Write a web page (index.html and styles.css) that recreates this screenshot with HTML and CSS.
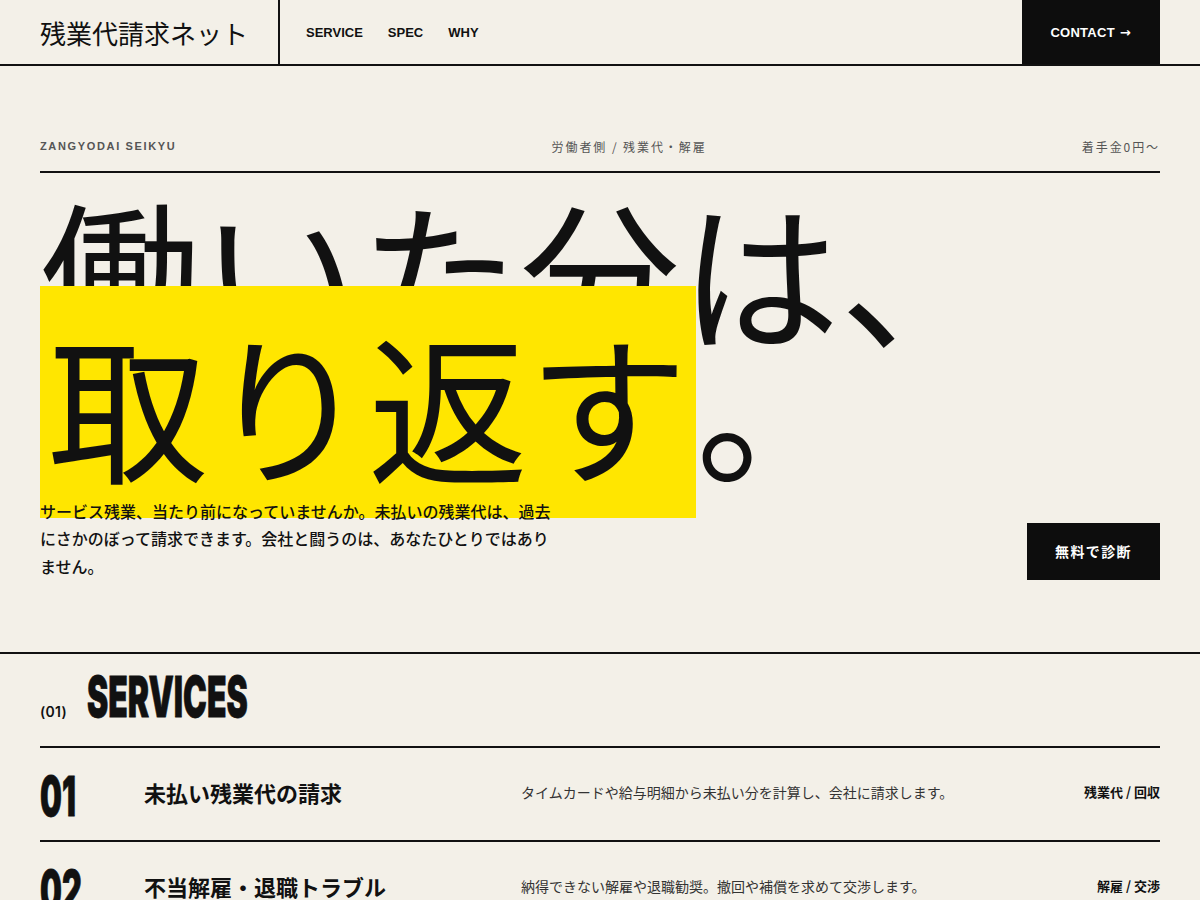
FILE: index.html
```html
<!DOCTYPE html>
<html lang="ja">
<head>
<meta charset="utf-8">
<title>残業代請求ネット</title>
<link rel="stylesheet" href="styles.css">
</head>
<body>
<header class="site-header">
  <div class="logo">残業代請求ネット</div>
  <nav class="nav">
    <a href="#service">SERVICE</a>
    <a href="#spec">SPEC</a>
    <a href="#why">WHY</a>
  </nav>
  <a class="contact" href="#contact">CONTACT <span class="arrow">→</span></a>
</header>

<main>
  <section class="hero">
    <div class="meta">
      <span class="meta-en">ZANGYODAI SEIKYU</span>
      <span class="meta-jp">労働者側 / 残業代・解雇</span>
      <span class="meta-jp">着手金0円〜</span>
    </div>
    <h1 class="headline">働いた分は、<br><span class="mark">取り返す</span>。</h1>
    <div class="hero-foot">
      <p class="lead">サービス残業、当たり前になっていませんか。未払いの残業代は、過去にさかのぼって請求できます。会社と闘うのは、あなたひとりではありません。</p>
      <a class="cta" href="#contact">無料で診断</a>
    </div>
  </section>

  <section class="services" id="service">
    <div class="services-head">
      <span class="sec-num">(01)</span>
      <h2 class="sec-title"><span class="condensed">SERVICES</span></h2>
    </div>
    <div class="row">
      <div class="row-num"><span class="condensed">01</span></div>
      <h3 class="row-title">未払い残業代の請求</h3>
      <p class="row-desc">タイムカードや給与明細から未払い分を計算し、会社に請求します。</p>
      <span class="row-tag">残業代 / 回収</span>
    </div>
    <div class="row">
      <div class="row-num"><span class="condensed">02</span></div>
      <h3 class="row-title">不当解雇・退職トラブル</h3>
      <p class="row-desc">納得できない解雇や退職勧奨。撤回や補償を求めて交渉します。</p>
      <span class="row-tag">解雇 / 交渉</span>
    </div>
    <div class="row">
      <div class="row-num"><span class="condensed">03</span></div>
      <h3 class="row-title">労働審判・訴訟</h3>
      <p class="row-desc">交渉で解決しない場合は、労働審判や訴訟で権利を守ります。</p>
      <span class="row-tag">審判 / 訴訟</span>
    </div>
  </section>
</main>
</body>
</html>
```

FILE: styles.css
```css
* { box-sizing: border-box; }

html, body {
  margin: 0;
  padding: 0;
}

body {
  background: #f3f0e8;
  color: #111;
  font-family: "Noto Sans CJK JP", "Noto Sans", sans-serif;
}

a { color: inherit; text-decoration: none; }

/* Header */
.site-header {
  display: flex;
  align-items: stretch;
  height: 66px;
  border-bottom: 2px solid #111;
}

.logo {
  display: flex;
  align-items: center;
  padding: 0 30px 0 40px;
  border-right: 2px solid #111;
  font-size: 26px;
  font-weight: 400;
}

.nav {
  flex: 1;
  display: flex;
  align-items: center;
  gap: 25px;
  padding-left: 26px;
  font-family: "Liberation Sans", Arial, sans-serif;
  font-weight: 700;
  font-size: 13px;
}

.contact {
  display: flex;
  align-items: center;
  gap: 5px;
  margin-right: 40px;
  padding: 0 29px 0 28px;
  background: #0d0d0d;
  color: #fff;
  font-family: "Liberation Sans", Arial, sans-serif;
  font-weight: 700;
  font-size: 13px;
  letter-spacing: 0.02em;
}

.arrow {
  font-family: "DejaVu Sans", sans-serif;
  font-size: 13px;
  font-weight: 700;
}

/* Hero */
.hero {
  padding: 0 40px 72px;
  border-bottom: 2px solid #111;
}

.meta {
  display: flex;
  justify-content: space-between;
  align-items: center;
  padding: 72px 0 16px;
  border-bottom: 2px solid #111;
  color: #555;
  line-height: 17px;
}

.meta-en {
  font-family: "Liberation Sans", Arial, sans-serif;
  font-weight: 700;
  font-size: 11px;
  letter-spacing: 0.15em;
}

.meta-jp {
  font-size: 12px;
  letter-spacing: 0.16em;
}

.headline {
  margin: 30px 0 0;
  font-size: 160px;
  font-weight: 400;
  line-height: 0.83;
  letter-spacing: 0;
}

.mark {
  background: #ffe600;
  padding: 0 8px;
}

.hero-foot {
  display: flex;
  justify-content: space-between;
  align-items: flex-end;
  margin-top: 29px;
}

.lead {
  margin: 0;
  width: 520px;
  font-size: 16px;
  font-weight: 500;
  line-height: 1.72;
}

.cta {
  display: block;
  padding: 20px 28px;
  background: #0d0d0d;
  color: #fff;
  font-size: 14px;
  font-weight: 700;
  letter-spacing: 0.1em;
  line-height: 17px;
}

/* Services */
.services {
  padding: 0 40px;
}

.services-head {
  display: flex;
  align-items: baseline;
  gap: 20px;
  height: 94px;
  padding-top: 10px;
  border-bottom: 2px solid #111;
}

.sec-num {
  font-family: Inter, "Liberation Sans", sans-serif;
  font-size: 14px;
  font-weight: 600;
  letter-spacing: 0.02em;
}

.sec-title {
  margin: 0;
  font-size: 57px;
  line-height: 1;
}

.condensed {
  display: inline-block;
  font-family: Inter, "Liberation Sans", sans-serif;
  font-weight: 900;
  transform: scaleX(0.56);
  transform-origin: left center;
  -webkit-text-stroke: 0.8px #111;
}

.row {
  display: grid;
  grid-template-columns: 104px 377px 1fr auto;
  align-items: center;
  height: 94px;
  padding-bottom: 5px;
  border-bottom: 2px solid #111;
}

.row-num {
  font-size: 55px;
  line-height: 1;
  padding-top: 5px;
}

.row-title {
  margin: 0;
  font-size: 22px;
  font-weight: 700;
}

.row-desc {
  margin: 0;
  font-size: 14px;
  color: #333;
}

.row-tag {
  font-size: 13px;
  font-weight: 700;
}
```
